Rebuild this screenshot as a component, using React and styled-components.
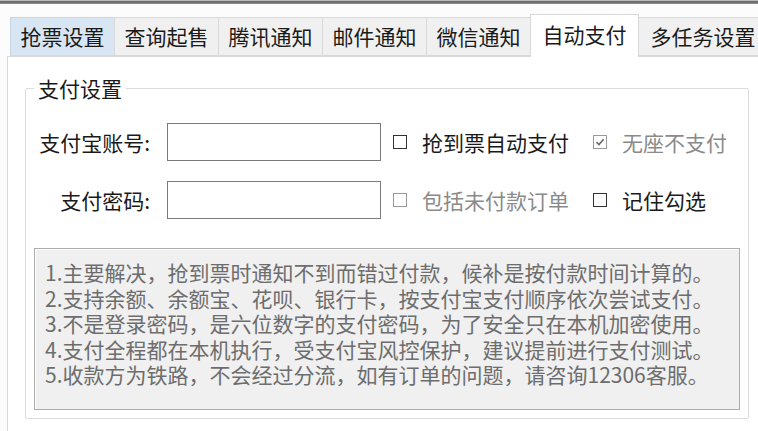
import React from "react";
import styled, { createGlobalStyle } from "styled-components";

const GlobalStyle = createGlobalStyle`
  html, body {
    margin: 0;
    padding: 0;
    background: #fcfcfc;
  }
  body {
    font-family: "Noto Sans CJK SC", "Microsoft YaHei", sans-serif;
    color: #1e1e1e;
    overflow: hidden;
  }
`;

const tabs = ["抢票设置", "查询起售", "腾讯通知", "邮件通知", "微信通知", "自动支付", "多任务设置"];

const notes = [
  "1.主要解决，抢到票时通知不到而错过付款，候补是按付款时间计算的。",
  "2.支持余额、余额宝、花呗、银行卡，按支付宝支付顺序依次尝试支付。",
  "3.不是登录密码，是六位数字的支付密码，为了安全只在本机加密使用。",
  "4.支付全程都在本机执行，受支付宝风控保护，建议提前进行支付测试。",
  "5.收款方为铁路，不会经过分流，如有订单的问题，请咨询12306客服。",
];

const App = () => {
  return (
    <Window>
      <GlobalStyle />
      <TopEdge />
      <TabStrip>
        {tabs.map((t, i) => (
          <Tab key={t} $active={i === 5} $hover={i === 0} $wide={i === 6}>
            {t}
          </Tab>
        ))}
      </TabStrip>
      <Panel>
        <Group>
          <Legend>支付设置</Legend>
          <FormGrid>
            <FieldLabel>支付宝账号:</FieldLabel>
            <TextBox />
            <Check label="抢到票自动支付" />
            <Check label="无座不支付" checked disabled />

            <FieldLabel>支付密码:</FieldLabel>
            <TextBox type="password" />
            <Check label="包括未付款订单" disabled />
            <Check label="记住勾选" />
          </FormGrid>
          <Notes>
            {notes.map((n) => (
              <NoteLine key={n}>{n}</NoteLine>
            ))}
          </Notes>
        </Group>
      </Panel>
    </Window>
  );
};

// checkbox with a drawn box, the Windows look
const Check = ({ label, checked, disabled }) => (
  <CheckRow $disabled={disabled}>
    <Box $disabled={disabled}>
      {checked && (
        <svg width="10" height="10" viewBox="0 0 10 10">
          <path d="M1.5 5.2 L4 7.6 L8.6 2.2" fill="none" stroke="currentColor" strokeWidth="1.6" />
        </svg>
      )}
    </Box>
    <span>{label}</span>
  </CheckRow>
);

const Window = styled.div`
  width: 758px;
  height: 431px;
  display: flex;
  flex-direction: column;
  overflow: hidden;
`;

const TopEdge = styled.div`
  height: 2px;
  border-top: 1px solid #b8b8b8;
  border-bottom: 1px solid #8a8a8a;
  background: #6e6e6e;
`;

const TabStrip = styled.div`
  display: flex;
  align-items: flex-end;
  height: 52px;
  padding-left: 11px;
  box-sizing: border-box;
  position: relative;
  z-index: 1;
`;

const Tab = styled.div`
  flex: none;
  width: ${(p) => (p.$active ? "109px" : p.$wide ? "130px" : "105px")};
  height: ${(p) => (p.$active ? "43px" : "39px")};
  margin-bottom: ${(p) => (p.$active ? "-1px" : "0")};
  margin-left: -1px;
  box-sizing: border-box;
  display: flex;
  align-items: center;
  justify-content: center;
  padding-bottom: ${(p) => (p.$active ? "4px" : "0")};
  font-size: 21px;
  line-height: 1;
  color: #1a1a1a;
  background: ${(p) => (p.$active ? "#ffffff" : p.$hover ? "#d8e6f3" : "#f0f0f0")};
  border: 1px solid ${(p) => (p.$hover ? "#c6d6e6" : "#d9d9d9")};
  border-bottom: ${(p) => (p.$active ? "none" : "1px solid #d9d9d9")};
`;

const Panel = styled.div`
  flex: 1;
  margin-left: 7px;
  background: #ffffff;
  border-left: 1px solid #d9d9d9;
  border-top: 1px solid #d9d9d9;
  padding: 18px 0 0 17px;
  box-sizing: border-box;
`;

const Group = styled.fieldset`
  margin: 0;
  padding: 0 0 8px 0;
  width: 724px;
  min-width: 0;
  box-sizing: border-box;
  border: 1px solid #dcdcdc;
  border-radius: 2px;
`;

const Legend = styled.legend`
  margin-left: 8px;
  padding: 0 4px;
  font-size: 21px;
  line-height: 26px;
  color: #1a1a1a;
`;

const FormGrid = styled.div`
  display: grid;
  grid-template-columns: 141px 214px 200px auto;
  grid-auto-rows: 38px;
  row-gap: 20px;
  margin-top: 22px;
  align-items: center;
`;

const FieldLabel = styled.div`
  text-align: right;
  padding-right: 17px;
  font-size: 21px;
  line-height: 1;
  color: #1a1a1a;
  white-space: nowrap;
`;

const TextBox = styled.input`
  width: 214px;
  height: 38px;
  box-sizing: border-box;
  border: 1px solid #7a7a7a;
  background: #ffffff;
  outline: none;
  padding: 0 6px;
  font-size: 18px;
`;

const CheckRow = styled.label`
  display: flex;
  align-items: center;
  margin-left: 12px;
  font-size: 21px;
  line-height: 1;
  color: ${(p) => (p.$disabled ? "#8a8a8a" : "#1a1a1a")};
  white-space: nowrap;
`;

const Box = styled.span`
  flex: none;
  width: 14px;
  height: 14px;
  box-sizing: border-box;
  border: 1px solid ${(p) => (p.$disabled ? "#9a9a9a" : "#333333")};
  background: #ffffff;
  margin-right: 15px;
  display: flex;
  align-items: center;
  justify-content: center;
  color: #6a6a6a;
`;

const Notes = styled.div`
  margin: 29px 8px 0 8px;
  height: 162px;
  box-sizing: border-box;
  background: #f0f0f0;
  border: 1px solid #adadad;
  box-shadow: inset 1px 1px 0 #ffffff;
  padding: 11px 0 0 10px;
  color: #6d6d6d;
`;

const NoteLine = styled.div`
  font-size: 21px;
  line-height: 25.5px;
  white-space: nowrap;
`;

export default App;
